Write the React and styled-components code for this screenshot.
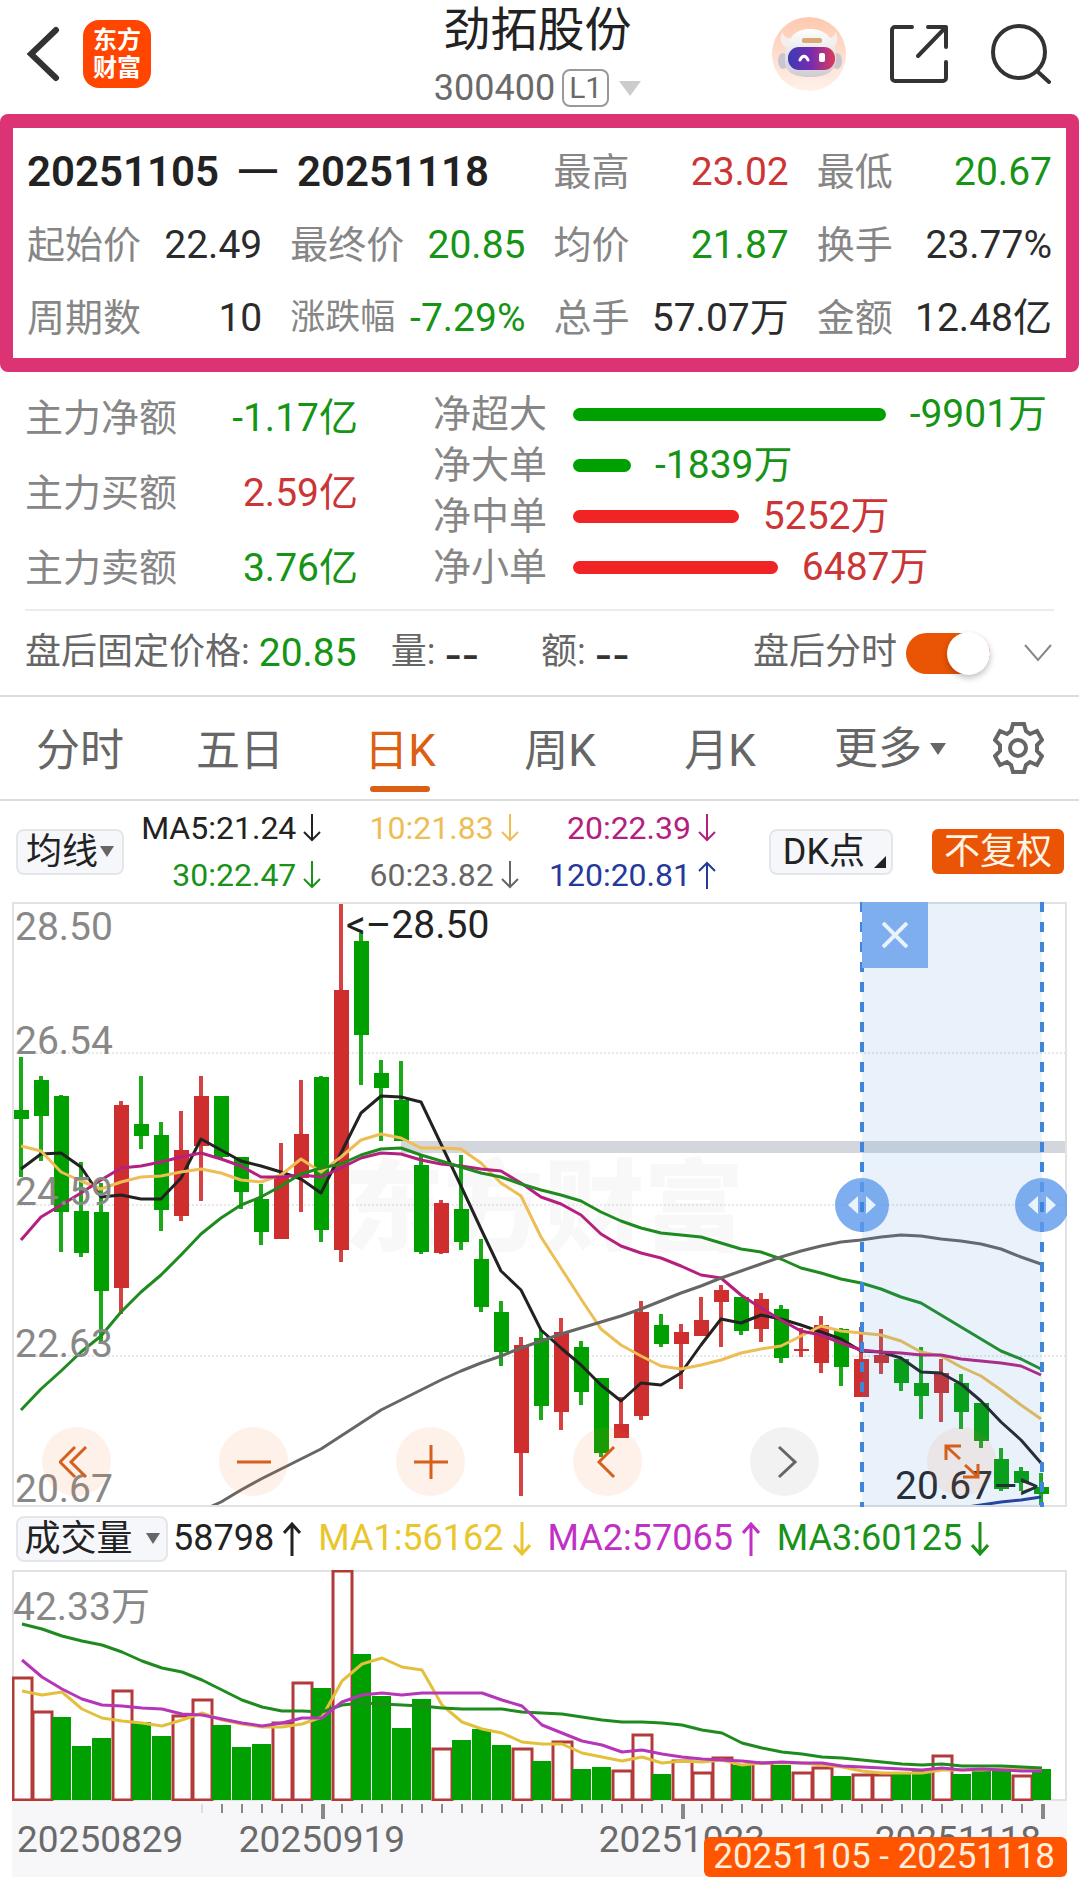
import { useState } from "react";
import styled, { createGlobalStyle } from "styled-components";

/* ===================== DATA ===================== */

const RED = "#cf2e2e";
const GREEN = "#00a000";

const tone = {
  up: "#cb3535",
  down: "#159415",
  plain: "#2b2b2b",
};

const summary = [
  { label: "最高", value: "23.02", color: tone.up },
  { label: "最低", value: "20.67", color: tone.down },
  { label: "起始价", value: "22.49", color: tone.plain },
  { label: "最终价", value: "20.85", color: tone.down },
  { label: "均价", value: "21.87", color: tone.down },
  { label: "换手", value: "23.77%", color: tone.plain },
  { label: "周期数", value: "10", color: tone.plain },
  { label: "涨跌幅", value: "-7.29%", color: tone.down, small: true },
  { label: "总手", value: "57.07万", color: tone.plain },
  { label: "金额", value: "12.48亿", color: tone.plain },
];

const mainFlow = [
  { label: "主力净额", value: "-1.17亿", color: tone.down },
  { label: "主力买额", value: "2.59亿", color: tone.up },
  { label: "主力卖额", value: "3.76亿", color: tone.down },
];

const orderFlow = [
  { label: "净超大", amount: -9901 },
  { label: "净大单", amount: -1839 },
  { label: "净中单", amount: 5252 },
  { label: "净小单", amount: 6487 },
];

const tabs = ["分时", "五日", "日K", "周K", "月K"];

const averages = [
  { text: "MA5:21.24", color: "#222", up: false },
  { text: "10:21.83", color: "#ecbe55", up: false },
  { text: "20:22.39", color: "#b5207f", up: false },
  { text: "30:22.47", color: "#1a921a", up: false },
  { text: "60:23.82", color: "#666", up: false },
  { text: "120:20.81", color: "#24399b", up: true },
];

const volumeAverages = [
  { text: "58798", color: "#222", up: true },
  { text: "MA1:56162", color: "#e9c52e", up: false },
  { text: "MA2:57065", color: "#c030c4", up: true },
  { text: "MA3:60125", color: "#1a921a", up: false },
];

// [high, body top, body bottom, low, rising]
const candles = [
  [155, 208, 217, 275, 0], [174, 178, 214, 259, 0], [193, 194, 310, 350, 0],
  [260, 309, 351, 355, 0], [281, 310, 389, 440, 0], [199, 203, 386, 412, 1],
  [174, 222, 234, 247, 0], [220, 233, 308, 329, 0], [209, 248, 314, 319, 1],
  [174, 194, 244, 299, 1], [194, 194, 255, 256, 0], [255, 255, 290, 307, 0],
  [282, 297, 330, 343, 0], [241, 275, 337, 337, 1], [178, 232, 276, 310, 1],
  [174, 175, 328, 340, 0], [0, 88, 348, 360, 1], [31, 39, 133, 183, 0],
  [158, 171, 186, 239, 0], [159, 198, 239, 239, 0], [253, 263, 350, 352, 0],
  [298, 301, 351, 352, 1], [253, 307, 340, 348, 0], [337, 357, 405, 410, 0],
  [399, 410, 450, 464, 0], [435, 443, 551, 594, 1], [428, 436, 504, 518, 0],
  [416, 430, 510, 528, 1], [439, 445, 490, 503, 0], [476, 476, 551, 555, 0],
  [495, 522, 536, 536, 1], [399, 410, 514, 518, 1], [412, 423, 442, 445, 0],
  [422, 430, 442, 487, 1], [395, 418, 434, 434, 1], [383, 388, 400, 445, 1],
  [395, 395, 429, 433, 0], [391, 397, 427, 440, 1], [403, 407, 456, 461, 0],
  [426, 447, 449, 455, 1], [414, 423, 461, 471, 1], [426, 427, 465, 484, 0],
  [425, 457, 495, 495, 1], [427, 453, 461, 472, 1], [456, 457, 481, 489, 0],
  [445, 481, 494, 517, 0], [457, 471, 491, 520, 1], [472, 481, 510, 527, 0],
  [501, 501, 539, 546, 0], [546, 557, 587, 589, 0], [565, 569, 581, 589, 0],
  [571, 585, 592, 603, 0],
];

const priceLines = [
  {
    color: "#222",
    from: 0,
    ys: [267, 252, 251, 265, 295, 293, 297, 297, 276, 237, 248, 259, 264, 270, 277, 291, 251, 211, 194, 195, 200, 242, 284, 327, 369, 388, 428, 446, 463, 483, 499, 481, 483, 471, 443, 417, 421, 413, 417, 423, 430, 437, 449, 450, 456, 470, 471, 482, 499, 520, 538, 561],
  },
  {
    color: "#ecbe55",
    from: 0,
    ys: [244, 249, 270, 279, 287, 280, 275, 274, 270, 267, 271, 278, 280, 273, 257, 270, 255, 238, 232, 236, 246, 246, 247, 261, 281, 294, 335, 366, 397, 427, 443, 454, 464, 467, 463, 458, 451, 447, 444, 434, 424, 429, 431, 433, 439, 450, 454, 465, 474, 488, 503, 517],
  },
  {
    color: "#b5207f",
    from: 0,
    ys: [338, 315, 303, 291, 278, 266, 264, 260, 255, 251, 257, 264, 275, 275, 273, 275, 266, 256, 251, 252, 258, 262, 264, 267, 269, 281, 295, 302, 313, 332, 344, 351, 356, 364, 373, 376, 393, 406, 418, 429, 433, 441, 448, 450, 451, 453, 453, 457, 459, 461, 464, 473],
  },
  {
    color: "#1f8b1f",
    from: 0,
    ys: [508, 487, 469, 450, 434, 410, 390, 373, 353, 332, 316, 303, 295, 284, 272, 266, 262, 253, 247, 246, 253, 259, 265, 271, 275, 282, 288, 293, 299, 310, 319, 326, 331, 333, 335, 341, 347, 350, 357, 366, 371, 377, 381, 387, 395, 401, 413, 425, 437, 449, 457, 467],
  },
  {
    color: "#666",
    from: 9,
    ys: [609, 600, 588, 577, 567, 557, 547, 534, 521, 508, 498, 488, 478, 469, 461, 454, 446, 439, 432, 426, 420, 414, 407, 399, 391, 384, 376, 369, 362, 355, 349, 344, 340, 338, 335, 333, 334, 337, 339, 342, 347, 355, 362],
  },
  { color: "#24399b", from: 47, ys: [606, 603, 600, 598, 595] },
];

// [top, rising]
const volumes = [
  [107, 1], [141, 1], [147, 0], [176, 0], [168, 0], [120, 1], [152, 0], [166, 0],
  [145, 1], [129, 1], [155, 0], [177, 0], [174, 0], [152, 1], [112, 1], [118, 0],
  [0, 1], [84, 0], [126, 0], [158, 0], [129, 0], [178, 1], [170, 0], [159, 0],
  [175, 0], [178, 1], [191, 0], [171, 1], [199, 0], [197, 0], [200, 1], [164, 1],
  [204, 0], [190, 1], [202, 1], [187, 1], [195, 0], [192, 1], [195, 0], [202, 1],
  [197, 1], [206, 0], [204, 1], [204, 1], [203, 0], [201, 0], [185, 1], [204, 0],
  [201, 0], [200, 0], [205, 1], [199, 0],
];

const volumeLines = [
  {
    color: "#e3c03c",
    from: 0,
    ys: [121, 125, 122, 139, 148, 151, 153, 156, 150, 143, 150, 154, 157, 157, 154, 147, 111, 94, 88, 97, 100, 135, 152, 159, 163, 172, 174, 174, 183, 187, 191, 187, 193, 191, 192, 190, 195, 193, 193, 193, 195, 197, 201, 203, 203, 203, 200, 200, 200, 199, 198, 200],
  },
  {
    color: "#1f8b1f",
    from: 0,
    ys: [54, 59, 66, 71, 75, 82, 91, 98, 102, 110, 120, 130, 137, 141, 141, 142, 135, 133, 134, 135, 136, 138, 139, 139, 139, 142, 143, 144, 147, 150, 152, 152, 153, 155, 160, 163, 173, 178, 182, 184, 187, 188, 190, 192, 194, 195, 194, 196, 196, 196, 197, 198],
  },
  {
    color: "#b636ba",
    from: 0,
    ys: [90, 107, 119, 129, 135, 136, 138, 139, 144, 145, 149, 153, 156, 153, 148, 148, 132, 125, 123, 125, 123, 123, 123, 123, 130, 136, 155, 163, 171, 175, 182, 180, 184, 187, 189, 190, 191, 193, 192, 193, 193, 196, 197, 198, 199, 200, 198, 200, 199, 200, 201, 201],
  },
];

const STEP = 20;
const toPoints = (line, offset) =>
  line.ys.map((y, i) => `${offset + (line.from + i) * STEP},${y}`).join(" ");

/* ===================== STYLES ===================== */

const GlobalStyle = createGlobalStyle`
  * {
    box-sizing: border-box;
  }

  body {
    margin: 0;
    background: #fff;
    color: #222;
    font-family: Roboto, "Noto Sans CJK SC", sans-serif;
    line-height: 1.2;
  }

  button {
    font-family: inherit;
    line-height: inherit;
    padding: 0;
    border: 0;
    background: none;
    color: inherit;
    cursor: pointer;
  }

  svg {
    display: block;
  }
`;

const Page = styled.main`
  overflow: hidden;
`;

const Header = styled.header`
  display: grid;
  grid-template-columns: 1fr auto 1fr;
  align-items: start;
  height: 114px;
  padding: 0 28px 0 24px;
`;

const HeaderSide = styled.div`
  display: flex;
  align-items: center;
  justify-content: ${({ $end }) => ($end ? "flex-end" : "flex-start")};
  gap: ${({ $end }) => ($end ? "43px" : "23px")};
  height: 108px;
`;

const Logo = styled.a`
  display: grid;
  place-content: center;
  width: 68px;
  height: 68px;
  border-radius: 16px;
  background: #ff4500;
  color: #fff;
  font-size: 24px;
  line-height: 28px;
  font-weight: 700;
  text-align: center;
  text-decoration: none;
`;

const Title = styled.h1`
  margin: 0;
  font-size: 47px;
  line-height: 60px;
  font-weight: 400;
  text-align: center;
`;

const CodeButton = styled.button`
  display: flex;
  align-items: center;
  margin: 6px auto 0;
  font-size: 36px;
  line-height: 44px;
  color: #6a6a6a;
`;

const Level = styled.span`
  margin: 0 10px 0 7px;
  padding: 0 5px;
  border: 2px solid #999;
  border-radius: 8px;
  font-size: 30px;
  line-height: 34px;
`;

const Caret = styled.span`
  border: ${({ $size }) => $size}px solid transparent;
  border-top: ${({ $size }) => $size + 4}px solid ${({ $color }) => $color};
  border-bottom: 0;
`;

const Summary = styled.section`
  display: grid;
  grid-template-columns: repeat(4, 1fr);
  column-gap: 28px;
  grid-auto-rows: 73px;
  align-items: center;
  padding: 8px 14px 3px;
  border: 14px solid #dc3374;
  border-width: 14px 13px;
  border-radius: 8px;
`;

const Period = styled.h2`
  grid-column: span 2;
  display: flex;
  gap: 20px;
  margin: 0;
  font-size: 42px;
  font-weight: 600;
`;

const PeriodDash = styled.span`
  font-family: "Liberation Sans", sans-serif;
  font-size: 38px;
`;

const Stat = styled.div`
  display: flex;
  align-items: center;
  justify-content: space-between;
  font-size: ${({ $small }) => ($small ? 35 : 38)}px;
  white-space: nowrap;
`;

const Label = styled.span`
  color: #868686;
`;

const Value = styled.span`
  font-size: 39px;
  color: ${({ $color }) => $color};
`;

const Flow = styled.section`
  display: grid;
  grid-template-columns: 333fr 621fr;
  column-gap: 75px;
  margin: 0 25px;
  padding: 9px 0 3px;
  border-bottom: 2px solid #ececec;
`;

const FlowTotals = styled.div`
  display: grid;
  grid-auto-rows: 75px;
  align-content: start;
`;

const FlowOrders = styled.div`
  display: grid;
  grid-auto-rows: 51px;
  align-content: start;
  padding-top: 8px;
`;

const OrderRow = styled.div`
  display: flex;
  align-items: center;
  font-size: 38px;
  white-space: nowrap;
`;

const Track = styled.div`
  flex: 1;
  display: flex;
  align-items: center;
  gap: 24px;
  margin-left: 26px;
`;

const Bar = styled.span`
  flex: none;
  height: 13px;
  border-radius: 7px;
  background: ${({ $up }) => ($up ? "#f02424" : GREEN)};
`;

const AfterHours = styled.section`
  display: flex;
  align-items: center;
  height: 86px;
  padding: 0 27px 0 25px;
  border-bottom: 2px solid #dcdcdc;
  font-size: 36px;
  color: #666;
  white-space: nowrap;
`;

const AfterItem = styled.span`
  display: flex;
  align-items: center;
  gap: 9px;
  margin-right: ${({ $gap }) => $gap}px;
`;

const Dashes = styled.span`
  font-family: "DejaVu Sans", sans-serif;
  font-size: 48px;
  line-height: 44px;
  color: #333;
`;

const SwitchLabel = styled.label`
  display: flex;
  align-items: center;
  gap: 9px;
  margin-left: auto;
  margin-right: 34px;
`;

const Switch = styled.input`
  appearance: none;
  display: flex;
  align-items: center;
  justify-content: ${({ checked }) => (checked ? "flex-end" : "flex-start")};
  width: 84px;
  height: 41px;
  margin: 0;
  border-radius: 21px;
  background: ${({ checked }) => (checked ? "#e95504" : "#ccc")};

  &::before {
    content: "";
    width: 43px;
    height: 43px;
    border-radius: 50%;
    background: #fff;
    box-shadow: 0 3px 6px rgba(0, 0, 0, 0.25);
  }
`;

const Tabs = styled.nav`
  display: flex;
  align-items: stretch;
  height: 104px;
  padding-right: 35px;
  border-bottom: 2px solid #dcdcdc;
`;

const Tab = styled.button`
  flex: 1;
  display: flex;
  flex-direction: column;
  align-items: center;
  justify-content: flex-end;
  gap: 3px;
  padding-bottom: 7px;
  font-size: 44px;
  line-height: 64px;
  color: ${({ $active }) => ($active ? "#dc5f14" : "#666")};

  &::after {
    content: "";
    width: 60px;
    height: 6px;
    border-radius: 3px;
    background: ${({ $active }) => ($active ? "#dc5f14" : "transparent")};
  }
`;

const MoreTab = styled.button`
  display: flex;
  align-items: center;
  gap: 8px;
  padding: 2px 47px 0 34px;
  font-size: 44px;
  color: #666;
`;

const Toolbar = styled.section`
  display: flex;
  align-items: center;
  height: 101px;
  padding: 0 15px 0 16px;
`;

const Chip = styled.button`
  position: relative;
  display: flex;
  align-items: center;
  justify-content: center;
  gap: ${({ $gap }) => $gap || 2}px;
  height: 46px;
  padding: 0 8px;
  border: 2px solid #e4e6ea;
  border-radius: 8px;
  background: #f6f7fa;
  font-size: 36px;
  line-height: 42px;
  white-space: nowrap;
`;

const DkChip = styled(Chip)`
  margin-left: auto;
  padding: 0 26px 0 12px;

  &::after {
    content: "";
    position: absolute;
    right: 5px;
    bottom: 5px;
    border: 6px solid #222;
    border-top-color: transparent;
    border-left-color: transparent;
  }
`;

const AdjustButton = styled.button`
  height: 45px;
  margin-left: 39px;
  padding: 0 12px;
  border-radius: 6px;
  background: #e95504;
  color: #fff3e6;
  font-size: 36px;
  line-height: 44px;
`;

const Averages = styled.div`
  flex: 0 1 592px;
  display: grid;
  grid-template-columns: repeat(3, 1fr);
  grid-auto-rows: 47px;
  align-items: center;
  justify-items: end;
`;

const Average = styled.span`
  display: flex;
  align-items: center;
  gap: ${({ $large }) => ($large ? 9 : 7)}px;
  font-size: ${({ $large }) => ($large ? 36 : 32)}px;
  color: ${({ $color }) => $color};
  white-space: nowrap;
`;

const Plot = styled.section`
  position: relative;
  margin: 0 12px;
  overflow: hidden;

  > svg {
    width: 100%;
    height: auto;
  }

  text {
    font-family: Roboto, "Noto Sans CJK SC", sans-serif;
  }
`;

const CloseButton = styled.button`
  position: absolute;
  top: 0;
  left: ${({ $left }) => $left}%;
  display: grid;
  place-items: center;
  width: 66px;
  height: 66px;
  background: #7eaeee;
`;

const Handle = styled.button`
  position: absolute;
  top: 50%;
  left: ${({ $left }) => $left}%;
  width: 54px;
  height: 54px;
  margin: -27px;
  border-radius: 50%;
  background: rgba(94, 154, 235, 0.8);
`;

const PlotControls = styled.div`
  position: absolute;
  left: 30px;
  right: 71px;
  bottom: 11px;
  display: flex;
  justify-content: space-between;
`;

const RoundButton = styled.button`
  display: grid;
  place-items: center;
  width: 69px;
  height: 69px;
  border-radius: 50%;
  background: ${({ $muted }) =>
    $muted ? "rgba(0, 0, 0, 0.05)" : "rgba(250, 120, 50, 0.1)"};
  color: ${({ $muted }) => ($muted ? "#666" : "#d4601c")};
`;

const VolumeHead = styled.div`
  display: flex;
  align-items: center;
  gap: 17px;
  height: 63px;
  padding: 0 16px;

  > button {
    width: 152px;
    margin-right: -12px;
  }
`;

const Axis = styled(Plot)`
  background: #f7f7fa;
`;

const RangeTag = styled.div`
  position: absolute;
  right: 0;
  bottom: 0;
  padding: 0 12px 0 9px;
  border-radius: 6px;
  background: #ff5500;
  color: #ffeedd;
  font-size: 35px;
  line-height: 40px;
  white-space: nowrap;
`;

/* ===================== ICONS ===================== */

const Arrow = ({ up, large }) => (
  <svg
    width="18"
    height={large ? 34 : 28}
    viewBox={large ? "0 0 18 34" : "0 0 18 28"}
    fill="none"
    stroke="currentColor"
    strokeWidth={large ? 3 : 2}
    aria-hidden="true"
  >
    {up ? (
      <path d={large ? "M9 34V2M1 11l8-9 8 9" : "M9 28V2M1 10l8-8 8 8"} />
    ) : (
      <path d={large ? "M9 0v32M1 23l8 9 8-9" : "M9 0v26M1 18l8 8 8-8"} />
    )}
  </svg>
);

const BackIcon = () => (
  <svg width="36" height="60" viewBox="0 0 36 60" fill="none" stroke="#333" strokeWidth="6" strokeLinecap="round" strokeLinejoin="miter">
    <path d="M32 6L7 30l25 24" />
  </svg>
);

const RobotIcon = () => (
  <svg width="75" height="75" viewBox="0 0 75 75">
    <defs>
      <linearGradient id="halo" x1="0" y1="0" x2="0" y2="1">
        <stop offset="0" stopColor="#fdc9ae" />
        <stop offset="1" stopColor="#fff1ea" />
      </linearGradient>
      <linearGradient id="visor" x1="0" y1="0" x2="1" y2="0">
        <stop offset="0" stopColor="#3c3bb4" />
        <stop offset="0.5" stopColor="#7a2bb0" />
        <stop offset="1" stopColor="#dc3c58" />
      </linearGradient>
      <linearGradient id="shell" x1="0" y1="0" x2="0" y2="1">
        <stop offset="0" stopColor="#fff" />
        <stop offset="1" stopColor="#cfcbd2" />
      </linearGradient>
    </defs>
    <circle cx="37" cy="37" r="37" fill="url(#halo)" />
    <path d="M10 15c-3 8-1 14 6 16l7-9c-7 0-11-2-13-7zM64 15c3 8 1 14-6 16l-7-9c7 0 11-2 13-7z" fill="#f6eeee" />
    <ellipse cx="11" cy="44" rx="5" ry="8" fill="#c9c6d0" />
    <ellipse cx="65" cy="44" rx="5" ry="8" fill="#c9c6d0" />
    <path d="M38 12c15 0 26 10 26 27 1 14-7 21-26 21S12 54 13 40c1-18 10-28 25-28z" fill="url(#shell)" />
    <rect x="30" y="21" width="20" height="5" rx="2" fill="#dba878" />
    <rect x="16" y="30" width="47" height="23" rx="11" fill="url(#visor)" />
    <path d="M28 43c2-5 6-5 8 0" fill="none" stroke="#fff" strokeWidth="3" strokeLinecap="round" />
    <rect x="47" y="36" width="6" height="9" rx="2" fill="#fff" />
  </svg>
);

const ShareIcon = () => (
  <svg width="58" height="58" viewBox="0 0 58 58" fill="none" stroke="#333" strokeWidth="4" strokeLinecap="round" strokeLinejoin="round">
    <path d="M22 2H5a3 3 0 0 0-3 3v48a3 3 0 0 0 3 3h48a3 3 0 0 0 3-3V37" />
    <path d="M38 2h18v20M55 3L28 31" />
  </svg>
);

const SearchIcon = () => (
  <svg width="60" height="60" viewBox="0 0 60 60" fill="none" stroke="#333" strokeWidth="4" strokeLinecap="round">
    <circle cx="28" cy="28" r="26" />
    <path d="M46 47l12 11" />
  </svg>
);

const GearIcon = () => (
  <svg width="51" height="52" viewBox="0 0 51 52" fill="none" stroke="#666" strokeWidth="4">
    <path d="M20 2h11l2 7 4 3 7-3 5 9-5 5v6l5 5-5 9-7-3-4 3-2 7H20l-2-7-4-3-7 3-5-9 5-5v-6l-5-5 5-9 7 3 4-3z" />
    <circle cx="25" cy="26" r="8" />
  </svg>
);

const StrokeIcon = ({ d }) => (
  <svg width="36" height="36" viewBox="0 0 36 36" fill="none" stroke="currentColor" strokeWidth="3">
    <path d={d} />
  </svg>
);

const controls = [
  { name: "最早", d: "M16 3L1 18l15 15M27 3L12 18l15 15" },
  { name: "缩小", d: "M1 18h34" },
  { name: "放大", d: "M1 18h34M18 1v34" },
  { name: "向左", d: "M24 3L9 18l15 15" },
  { name: "向右", d: "M12 3l16 15-16 15", muted: true },
  { name: "全屏", d: "M2 16V2h15M3 3l13 12M34 20v13H19M33 32L21 21" },
];

/* ===================== CHARTS ===================== */

const CHART_W = 1055;
const RANGE = [850, 1030];
const percent = (x) => (x / CHART_W) * 100;

function PriceChart() {
  return (
    <svg viewBox="0 0 1055 605" role="img" aria-label="日K">
      <text x="332" y="341" fontSize="100" fontWeight="900" fill="#f8f8f8">
        东方财富
      </text>
      <g stroke="#d0d0d0" strokeDasharray="2 2">
        <path d="M0 151H1055M0 303H1055M0 454H1055" />
      </g>
      <rect x="389" y="239" width="666" height="12" fill="#d3d6dc" />
      {candles.map(([high, top, bottom, low, rising], i) => (
        <g key={i} fill={rising ? RED : GREEN}>
          <rect x={7 + i * STEP} y={high} width="4" height={low - high} fillOpacity="0.9" />
          <rect x={2 + i * STEP} y={top} width="15" height={bottom - top} />
        </g>
      ))}
      {priceLines.map((line) => (
        <polyline
          key={line.color}
          points={toPoints(line, 9)}
          fill="none"
          stroke={line.color}
          strokeWidth="3"
          strokeLinejoin="round"
        />
      ))}
      <rect x="1" y="1" width="1053" height="603" fill="none" stroke="#e2e2e4" strokeWidth="2" />
      <g fontSize="39" fill="#888">
        <text x="3" y="38">28.50</text>
        <text x="3" y="152">26.54</text>
        <text x="3" y="303">24.59</text>
        <text x="3" y="455">22.63</text>
        <text x="3" y="600">20.67</text>
      </g>
      <g fontSize="39" fill="#222">
        <text x="334" y="36">&lt;–28.50</text>
        <text x="1027" y="597" textAnchor="end">20.67–&gt;</text>
      </g>
      <rect x={RANGE[0]} y="0" width={RANGE[1] - RANGE[0]} height="605" fill="#4a90e2" opacity="0.12" />
      {RANGE.map((x) => (
        <path key={x} d={`M${x} 0V605`} stroke="#3f85da" strokeWidth="4" strokeDasharray="10 10" />
      ))}
    </svg>
  );
}

function VolumeChart() {
  return (
    <svg viewBox="0 0 1055 231" role="img" aria-label="成交量">
      <rect x="1" y="1" width="1053" height="229" fill="none" stroke="#e2e2e4" strokeWidth="2" />
      {volumes.map(([top, rising], i) =>
        rising ? (
          <rect key={i} x={1 + i * STEP} y={top + 1} width="19" height={229 - top} fill="#fff" stroke="#b43a3a" strokeWidth="3" />
        ) : (
          <rect key={i} x={i * STEP} y={top} width="19" height={230 - top} fill={GREEN} />
        )
      )}
      {volumeLines.map((line) => (
        <polyline
          key={line.color}
          points={toPoints(line, 10)}
          fill="none"
          stroke={line.color}
          strokeWidth="3"
          strokeLinejoin="round"
        />
      ))}
      <text x="1" y="50" fontSize="39" fill="#888">
        42.33万
      </text>
    </svg>
  );
}

function DateAxis() {
  const majors = [15, 33, 51];
  return (
    <svg viewBox="0 0 1055 76" role="img" aria-label="日期">
      {volumes.map((_, i) =>
        i < 9 ? null : (
          <rect
            key={i}
            x={9 + i * STEP}
            y="3"
            width={majors.includes(i) ? 4 : 2}
            height={majors.includes(i) ? 15 : 9}
            fill={i === 9 ? "#ddd" : "#888"}
          />
        )
      )}
      <g fontSize="37" fill="#6a6a6a">
        <text x="5" y="51">20250829</text>
        <text x="310" y="51" textAnchor="middle">20250919</text>
        <text x="670" y="51" textAnchor="middle">20251023</text>
        <text x="1029" y="51" textAnchor="end">20251118</text>
      </g>
    </svg>
  );
}

/* ===================== COMPONENT ===================== */

export default function App() {
  const [active, setActive] = useState("日K");
  const [afterHours, setAfterHours] = useState(true);
  const [selecting, setSelecting] = useState(true);

  return (
    <Page>
      <GlobalStyle />

      <Header>
        <HeaderSide>
          <button aria-label="返回">
            <BackIcon />
          </button>
          <Logo href="#">
            东方
            <br />
            财富
          </Logo>
        </HeaderSide>
        <div>
          <Title>劲拓股份</Title>
          <CodeButton>
            300400
            <Level>L1</Level>
            <Caret $size={11} $color="#ccc" />
          </CodeButton>
        </div>
        <HeaderSide $end>
          <button aria-label="智能助手">
            <RobotIcon />
          </button>
          <button aria-label="分享">
            <ShareIcon />
          </button>
          <button aria-label="搜索">
            <SearchIcon />
          </button>
        </HeaderSide>
      </Header>

      <Summary>
        <Period>
          <span>20251105</span>
          <PeriodDash>—</PeriodDash>
          <span>20251118</span>
        </Period>
        {summary.map((s) => (
          <Stat key={s.label} $small={s.small}>
            <Label>{s.label}</Label>
            <Value $color={s.color}>{s.value}</Value>
          </Stat>
        ))}
      </Summary>

      <Flow>
        <FlowTotals>
          {mainFlow.map((f) => (
            <Stat key={f.label}>
              <Label>{f.label}</Label>
              <Value $color={f.color}>{f.value}</Value>
            </Stat>
          ))}
        </FlowTotals>
        <FlowOrders>
          {orderFlow.map((o) => (
            <OrderRow key={o.label}>
              <Label>{o.label}</Label>
              <Track>
                <Bar
                  $up={o.amount > 0}
                  style={{ width: `${(Math.abs(o.amount) / 9901) * 65}%` }}
                />
                <Value $color={o.amount > 0 ? tone.up : tone.down}>
                  {`${o.amount}万`}
                </Value>
              </Track>
            </OrderRow>
          ))}
        </FlowOrders>
      </Flow>

      <AfterHours>
        <AfterItem $gap={34}>
          盘后固定价格: <Value $color={tone.down}>20.85</Value>
        </AfterItem>
        <AfterItem $gap={62}>
          量: <Dashes>--</Dashes>
        </AfterItem>
        <AfterItem $gap={0}>
          额: <Dashes>--</Dashes>
        </AfterItem>
        <SwitchLabel>
          盘后分时
          <Switch
            type="checkbox"
            checked={afterHours}
            onChange={(e) => setAfterHours(e.target.checked)}
          />
        </SwitchLabel>
        <button aria-label="展开">
          <svg width="28" height="18" viewBox="0 0 28 18" fill="none" stroke="#888" strokeWidth="2">
            <path d="M1 1l13 15L27 1" />
          </svg>
        </button>
      </AfterHours>

      <Tabs>
        {tabs.map((t) => (
          <Tab key={t} $active={t === active} onClick={() => setActive(t)}>
            {t}
          </Tab>
        ))}
        <MoreTab>
          更多
          <Caret $size={8} $color="#666" />
        </MoreTab>
        <button aria-label="设置">
          <GearIcon />
        </button>
      </Tabs>

      <Toolbar>
        <Chip>
          均线
          <Caret $size={7} $color="#666" />
        </Chip>
        <Averages>
          {averages.map((a) => (
            <Average key={a.text} $color={a.color}>
              {a.text}
              <Arrow up={a.up} />
            </Average>
          ))}
        </Averages>
        <DkChip>DK点</DkChip>
        <AdjustButton>不复权</AdjustButton>
      </Toolbar>

      <Plot>
        <PriceChart />
        <PlotControls>
          {controls.map((c) => (
            <RoundButton key={c.name} aria-label={c.name} $muted={c.muted}>
              <StrokeIcon d={c.d} />
            </RoundButton>
          ))}
        </PlotControls>
        {selecting && (
          <>
            <CloseButton
              aria-label="关闭"
              $left={percent(RANGE[0])}
              onClick={() => setSelecting(false)}
            >
              <svg width="26" height="26" viewBox="0 0 26 26" stroke="#e9f2fd" strokeWidth="4">
                <path d="M1 1l24 24M25 1L1 25" />
              </svg>
            </CloseButton>
            {RANGE.map((x) => (
              <Handle key={x} aria-label="调整区间" $left={percent(x)}>
                <svg width="54" height="54" viewBox="0 0 54 54" fill="#e9f2fd">
                  <path d="M13 27l10-9v18zM41 27l-10-9v18z" />
                  <path d="M25 24h4v10h-4z" fill="#3f85da" />
                </svg>
              </Handle>
            ))}
          </>
        )}
      </Plot>

      <VolumeHead>
        <Chip $gap={13}>
          成交量
          <Caret $size={7} $color="#666" />
        </Chip>
        {volumeAverages.map((a) => (
          <Average key={a.text} $color={a.color} $large>
            {a.text}
            <Arrow up={a.up} large />
          </Average>
        ))}
      </VolumeHead>

      <Plot>
        <VolumeChart />
      </Plot>

      <Axis>
        <DateAxis />
        <RangeTag>20251105 - 20251118</RangeTag>
      </Axis>
    </Page>
  );
}
